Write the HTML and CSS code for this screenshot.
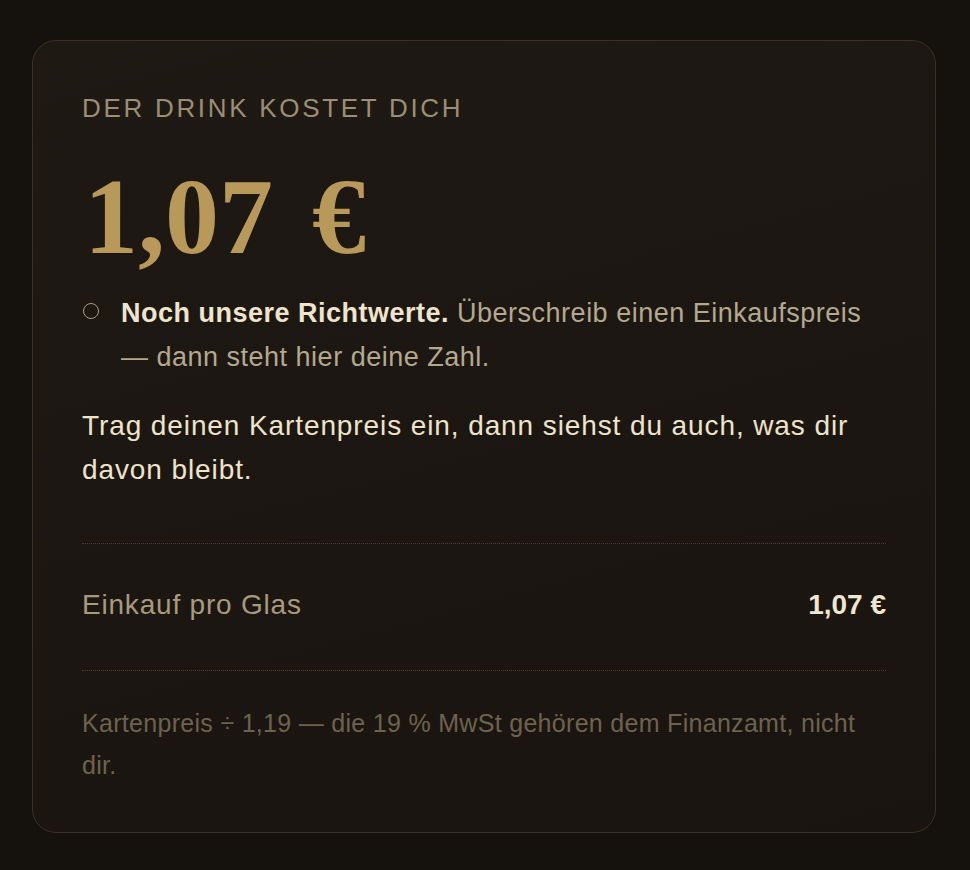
FILE: index.html
```html
<!DOCTYPE html>
<html lang="de">
<head>
<meta charset="UTF-8">
<meta name="viewport" content="width=device-width, initial-scale=1.0"/>
<title>Der Drink kostet dich</title>
<link rel="stylesheet" href="styles.css">
</head>
<body>
<div class="card">
    <div class="label">Der Drink kostet dich</div>
    <div class="price">1,07 €</div>
    <div class="note">
        <span class="dot"></span>
        <p><strong>Noch unsere Richtwerte.</strong> Überschreib einen Einkaufspreis — dann steht hier deine Zahl.</p>
    </div>
    <p class="hint">Trag deinen Kartenpreis ein, dann siehst du auch, was dir davon bleibt.</p>
    <div class="row">
        <span>Einkauf pro Glas</span>
        <strong>1,07 €</strong>
    </div>
    <p class="foot">Kartenpreis ÷ 1,19 — die 19 % MwSt gehören dem Finanzamt, nicht dir.</p>
</div>
</body>
</html>
```

FILE: styles.css
```css
* { margin:0; padding:0; box-sizing:border-box; }
body {
    font-family: 'Liberation Sans', Arial, sans-serif;
    background: #15110d;
    padding: 40px 34px 37px 32px;
    height: 100vh;
}
.card {
    background: linear-gradient(165deg, #1f1914, #19140f);
    border: 1px solid #3a3122;
    border-radius: 24px;
    padding: 51px 49px 40px 49px;
    height: 100%;
}
.label {
    color: #9c8e74;
    font-size: 26px;
    letter-spacing: 2.7px;
    text-transform: uppercase;
    line-height: 32px;
}
.price {
    font-family: 'Liberation Serif', 'DejaVu Serif', serif;
    font-weight: 700;
    font-size: 108px;
    word-spacing: 12px;
    color: #b8995a;
    line-height: 1;
    margin: 39px 0 0 2px;
}
.note {
    display: flex;
    gap: 22px;
    align-items: flex-start;
    margin-top: 20px;
}
.dot {
    flex: none;
    width: 16px; height: 16px;
    border: 1.5px solid #a89c84;
    border-radius: 50%;
    margin: 12px 0 0 1px;
}
.note p {
    color: #b4a88f;
    font-size: 27px;
    letter-spacing: 0.5px;
    line-height: 44px;
}
.note strong { color: #efe4cd; }
.hint {
    color: #eee3cb;
    font-size: 28px;
    letter-spacing: 0.9px;
    line-height: 44px;
    margin-top: 25px;
}
.row {
    display: flex;
    justify-content: space-between;
    border-top: 1px dotted #4a3f2b;
    border-bottom: 1px dotted #4a3f2b;
    margin-top: 51px;
    padding: 41px 0 45px;
    font-size: 28px;
    line-height: 40px;
    letter-spacing: 0.8px;
}
.row span { color: #a89a7e; }
.row strong { color: #f1e6cf; letter-spacing: 0; }
.foot {
    color: #6e624e;
    font-size: 25px;
    letter-spacing: 0.3px;
    line-height: 42px;
    margin-top: 31px;
}
```
